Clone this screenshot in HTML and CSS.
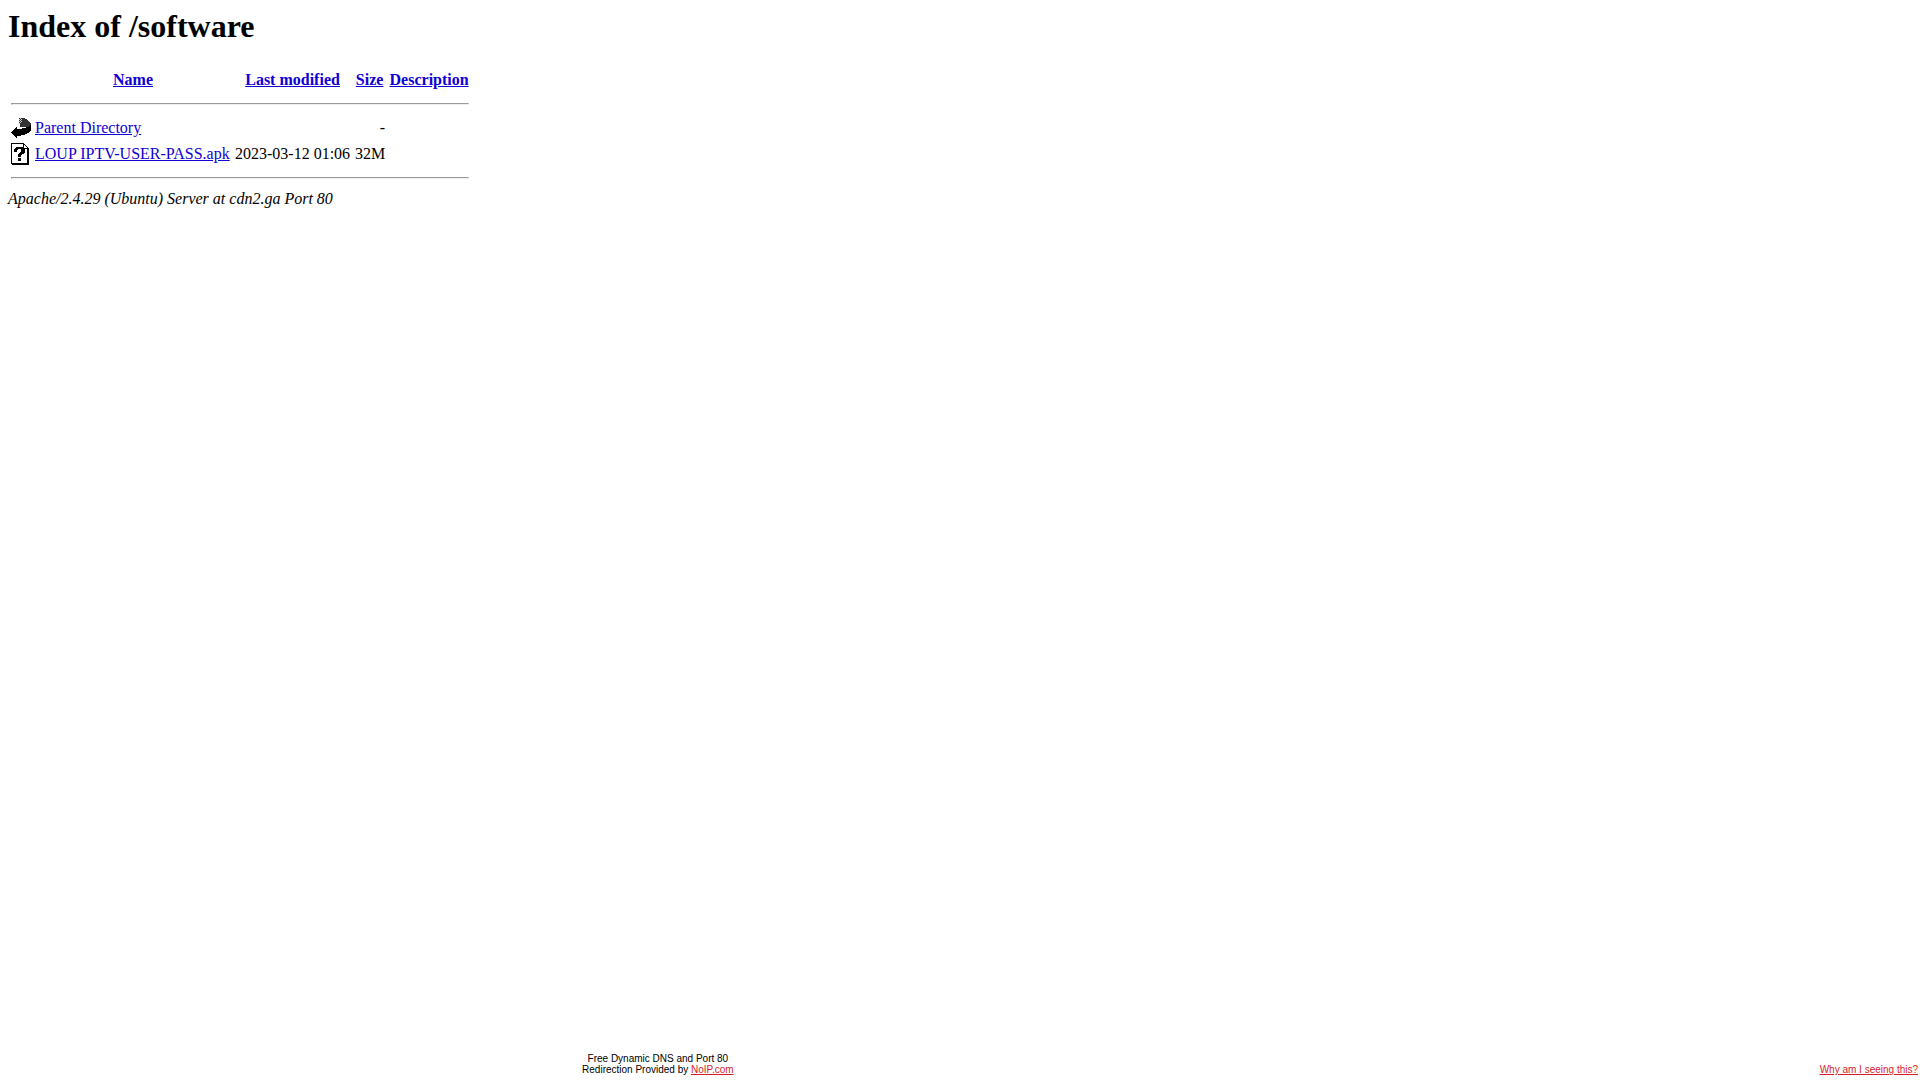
FILE: index.html
```html
<!DOCTYPE html>
<html lang="en">
<head>
  <meta charset="UTF-8" />
  <meta name="viewport" content="width=device-width, initial-scale=1.0" />
  <title>Index of /software</title>
  <link rel="stylesheet" href="styles.css">
</head>
<body>
  <main class="listing">
    <h1>Index of /software</h1>
    <table class="files">
      <tr>
        <th class="icon"></th>
        <th class="name"><a href="#">Name</a></th>
        <th class="modified"><a href="#">Last modified</a></th>
        <th class="size-head"><a href="#">Size</a></th>
        <th class="description"><a href="#">Description</a></th>
      </tr>
      <tr><td colspan="5"><hr></td></tr>
      <tr>
        <td class="icon">
          <svg width="20" height="22" viewBox="0 0 20 22" shape-rendering="crispEdges" role="img" aria-label="[PARENTDIR]">
            <path fill="#333" d="M8 1h5l4 2 3 4v2l-5 1H9V7H8z" />
            <path fill="#ccc" d="M9 1h1v1h-1zM8 2h1v1h-1zM10 2h1v1h-1zM9 3h1v1h-1zM8 4h1v1h-1zM10 4h1v1h-1zM9 5h1v1h-1zM8 6h1v1h-1z" />
            <path d="M0 15l5-5h1v2h2l5-1 4-1 3-3v7l-3 2-4 2-6 1H6v2H5z" />
          </svg>
        </td>
        <td><a href="#">Parent Directory</a></td>
        <td></td>
        <td class="size">-</td>
        <td></td>
      </tr>
      <tr>
        <td class="icon">
          <svg width="20" height="22" viewBox="0 0 20 22" shape-rendering="crispEdges" role="img" aria-label="[   ]">
            <path d="M0 0h13v1h1v1h1v1h1v1h1v1h1v17H1v-1H0z" />
            <path fill="#fff" d="M1 1h11v5h4v14H1z" />
            <path fill="#fff" d="M13 2h1v1h1v1h1v1h-3z" />
            <path d="M5 4h7v1h1v1h1v4h-1v1h-2v1h-1v2H7v-3h1v-1h1V9h1V6H7v1H6v2H3V6h1V5h1zM7 15h3v3H7z" />
          </svg>
        </td>
        <td><a href="#">LOUP IPTV-USER-PASS.apk</a></td>
        <td>2023-03-12 01:06</td>
        <td class="size">32M</td>
        <td></td>
      </tr>
      <tr><td colspan="5"><hr></td></tr>
    </table>
    <address>Apache/2.4.29 (Ubuntu) Server at cdn2.ga Port 80</address>
  </main>

  <footer class="redirect">
    <p class="provider">Free Dynamic DNS and Port 80<br>Redirection Provided by <a href="#">NoIP.com</a></p>
    <a class="why" href="#">Why am I seeing this?</a>
  </footer>
</body>
</html>
```
FILE: styles.css
```css
body {
  margin: 0;
  min-height: 100vh;
  display: flex;
  flex-direction: column;
  background: #fff;
  color: #000;
  font-family: "Liberation Serif", "Times New Roman", serif;
  font-size: 16px;
  line-height: 18px;
}

a {
  color: #1000d4;
}

.listing {
  padding: 8px;
}

h1 {
  margin: 0 0 21px;
  font-size: 32px;
  line-height: 37px;
}

.files {
  border-spacing: 2px;
}

.files th,
.files td {
  padding: 1px;
  white-space: nowrap;
}

.files .icon {
  width: 20px;
  height: 22px;
}

.name {
  width: 196px;
}

.modified {
  width: 115px;
}

.size-head {
  width: 31px;
}

.description {
  width: 80px;
}

.icon svg {
  display: block;
}

.size {
  text-align: right;
}

hr {
  margin: 8px 0;
}

.redirect {
  margin-top: auto;
  padding: 0 2px 5px 0;
  display: grid;
  grid-template-columns: 68.6% auto;
  align-items: end;
  font-family: "Liberation Sans", Arial, sans-serif;
  font-size: 10px;
  line-height: 11px;
}

.redirect a {
  color: #d81c28;
}

.provider {
  margin: 0;
  text-align: center;
}

.why {
  justify-self: end;
}
```
